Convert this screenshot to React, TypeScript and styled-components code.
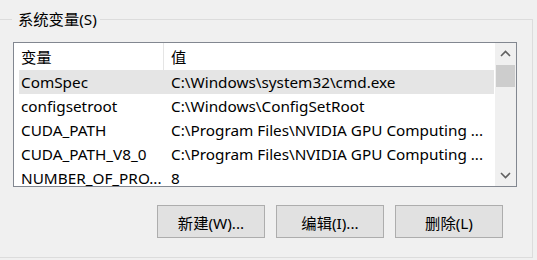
import React from 'react';
import styled, { createGlobalStyle } from 'styled-components';

const GlobalStyle = createGlobalStyle`
  html, body {
    margin: 0;
    padding: 0;
    background: #f0f0f0;
  }
  body {
    font-family: 'Noto Sans', 'Noto Sans CJK SC', sans-serif;
    font-size: 15.3px;
    color: #000;
  }
`;

type Variable = { name: string; value: string };

const variables: Variable[] = [
  { name: 'ComSpec', value: 'C:\\Windows\\system32\\cmd.exe' },
  { name: 'configsetroot', value: 'C:\\Windows\\ConfigSetRoot' },
  { name: 'CUDA_PATH', value: 'C:\\Program Files\\NVIDIA GPU Computing ...' },
  { name: 'CUDA_PATH_V8_0', value: 'C:\\Program Files\\NVIDIA GPU Computing ...' },
  { name: 'NUMBER_OF_PRO...', value: '8' },
];

function Chevron({ up }: { up?: boolean }) {
  return (
    <svg width='11' height='7' viewBox='0 0 11 7'>
      <polyline
        points={up ? '1,6 5.5,1.5 10,6' : '1,1 5.5,5.5 10,1'}
        fill='none'
        stroke='#606060'
        strokeWidth='1.6'
      />
    </svg>
  );
}

export default function App() {
  return (
    <>
      <GlobalStyle />
      <Page>
        <GroupBox>
          <Legend>系统变量(S)</Legend>
          <ListBox>
            <ListArea>
              <HeaderRow>
                <HeaderCell width={150}>变量</HeaderCell>
                <HeaderCell>值</HeaderCell>
              </HeaderRow>
              {variables.map((v, i) => (
                <Row key={v.name} selected={i === 0}>
                  <NameCell>{v.name}</NameCell>
                  <ValueCell>{v.value}</ValueCell>
                </Row>
              ))}
            </ListArea>
            <ScrollBar>
              <ArrowButton>
                <Chevron up />
              </ArrowButton>
              <Track>
                <Thumb />
              </Track>
              <ArrowButton>
                <Chevron />
              </ArrowButton>
            </ScrollBar>
          </ListBox>
          <ButtonRow>
            <Button type='button'>新建(W)...</Button>
            <Button type='button'>编辑(I)...</Button>
            <Button type='button'>删除(L)</Button>
          </ButtonRow>
        </GroupBox>
      </Page>
    </>
  );
}

const Page = styled.div`
  width: 537px;
  height: 260px;
  padding-top: 9px;
  box-sizing: border-box;
  overflow: hidden;
`;

const GroupBox = styled.fieldset`
  margin: 0 4px 0 0;
  padding: 0 15px 20px 13px;
  border: 1px solid #dcdcdc;
  border-left: none;
  height: 249px;
  box-sizing: border-box;
`;

const Legend = styled.legend`
  padding: 0 3px 0 6px;
  margin-left: -1px;
  line-height: 20px;
  font-size: 15.3px;
`;

const ListBox = styled.div`
  margin-top: 13px;
  height: 145px;
  box-sizing: border-box;
  border: 1px solid #828790;
  background: #fff;
  display: flex;
  overflow: hidden;
`;

const ListArea = styled.div`
  flex: 1;
  display: flex;
  flex-direction: column;
  min-width: 0;
`;

const HeaderRow = styled.div`
  display: flex;
  height: 27px;
  flex-shrink: 0;
  align-items: center;
`;

const HeaderCell = styled.div<{ width?: number }>`
  box-sizing: border-box;
  height: 100%;
  display: flex;
  align-items: center;
  padding-left: 7px;
  width: ${props => (props.width ? `${props.width}px` : 'auto')};
  flex: ${props => (props.width ? 'none' : '1')};
  border-right: ${props => (props.width ? '1px solid #e5e5e5' : 'none')};
  padding-bottom: 2px;
`;

const Row = styled.div<{ selected?: boolean }>`
  display: flex;
  height: 24px;
  flex-shrink: 0;
  align-items: center;
  margin: 0 1px 0 5px;
  background: ${props => (props.selected ? '#e5e5e5' : 'transparent')};
  white-space: nowrap;
`;

const NameCell = styled.div`
  width: 145px;
  padding-left: 2px;
  box-sizing: border-box;
  overflow: hidden;
`;

const ValueCell = styled.div`
  flex: 1;
  padding-left: 7px;
  overflow: hidden;
`;

const ScrollBar = styled.div`
  width: 21px;
  flex-shrink: 0;
  background: #f0f0f0;
  display: flex;
  flex-direction: column;
`;

const ArrowButton = styled.div`
  height: 21px;
  display: flex;
  align-items: center;
  justify-content: center;
  flex-shrink: 0;
`;

const Track = styled.div`
  flex: 1;
  padding: 1px 1px 0 1px;
`;

const Thumb = styled.div`
  height: 22px;
  background: #cdcdcd;
`;

const ButtonRow = styled.div`
  display: flex;
  justify-content: flex-end;
  gap: 11px;
  margin-top: 18px;
  padding-right: 14px;
`;

const Button = styled.button`
  width: 108px;
  height: 33px;
  box-sizing: border-box;
  background: #e1e1e1;
  border: 1px solid #adadad;
  border-radius: 0;
  font-family: 'Noto Sans', 'Noto Sans CJK SC', sans-serif;
  font-size: 15.3px;
  color: #000;
  padding: 0;
`;
